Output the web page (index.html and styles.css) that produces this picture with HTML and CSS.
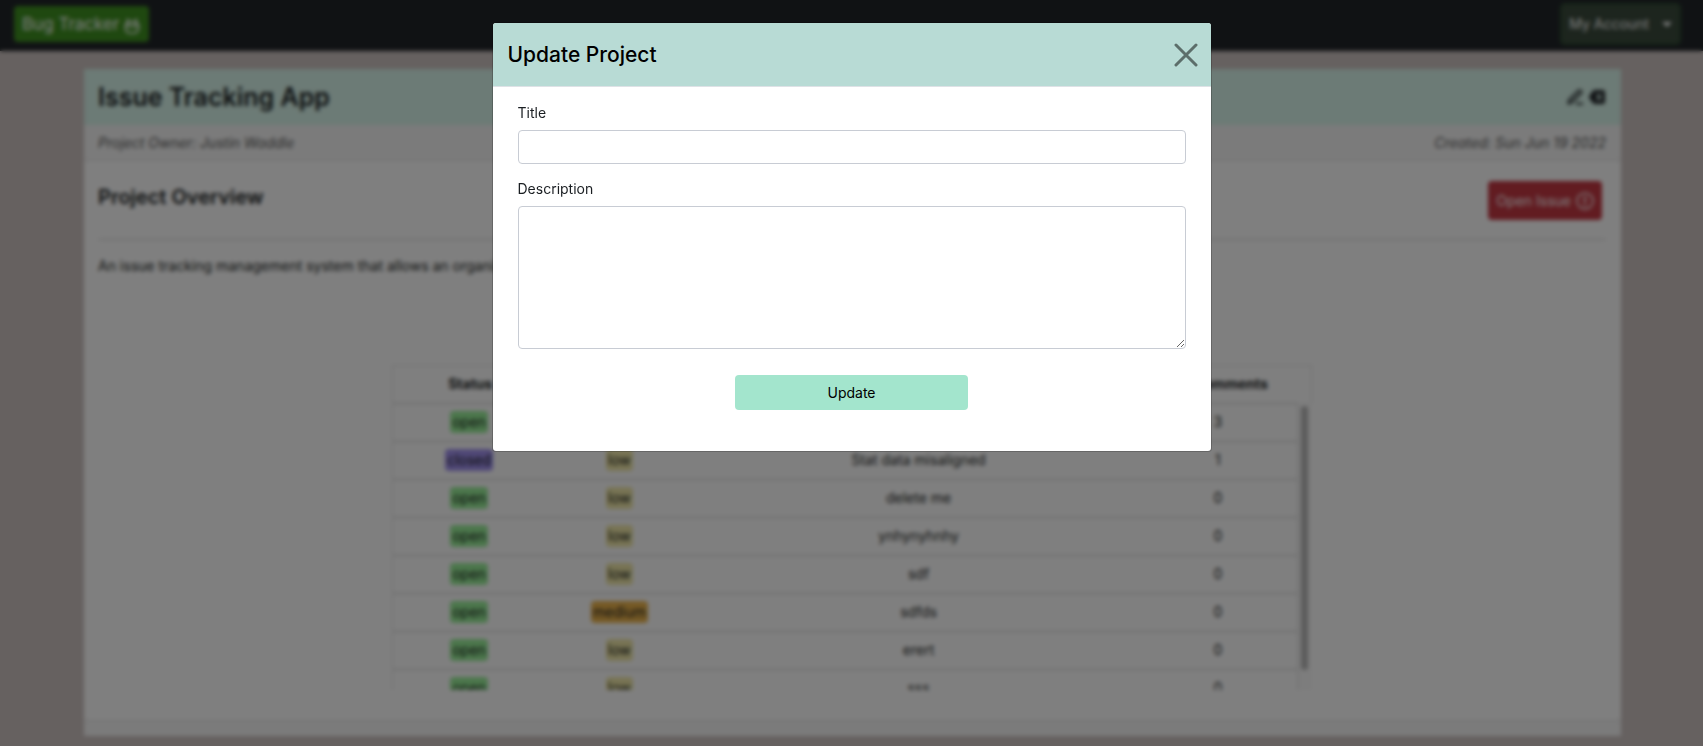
FILE: index.html
```html
<!DOCTYPE html>
<html lang="en">
<head>
<meta charset="utf-8">
<meta name="viewport" content="width=device-width, initial-scale=1">
<title>Bug Tracker</title>
<link rel="stylesheet" href="styles.css">
</head>
<body>
<header class="navbar">
  <a class="brand" href="#">Bug Tracker
    <svg class="icon-bug" viewBox="0 0 16 16" fill="none" stroke="currentColor" stroke-width="1.7" aria-hidden="true"><path d="M3 .8l2 3M13 .8l-2 3M5.500 3.800h5c2.800 0 4.200 2.200 4.200 5s-1.500 6.200-4.200 6.200h-5c-2.700 0-4.200-3.400-4.200-6.200s1.400-5 4.200-5zM4 6v2.200h8V6"/></svg>
  </a>
  <button class="account" type="button">My Account <span class="caret"></span></button>
</header>

<main class="card">
  <div class="card-header">
    <h1 class="project-name">Issue Tracking App</h1>
    <div class="actions">
      <button class="icon-button" type="button" aria-label="Edit project">
        <svg viewBox="0 0 16 16" fill="none" stroke="currentColor" stroke-width="1.900" stroke-linejoin="round" aria-hidden="true"><path d="M1.200 14.500l1-3.500L11.500 1.700c1.500-1.500 4 1 2.500 2.500L4.700 13.500l-3.500 1zM9 14.800h7"/></svg>
      </button>
      <button class="icon-button" type="button" aria-label="Delete project">
        <svg viewBox="0 0 16 16" fill="currentColor" aria-hidden="true"><path fill-rule="evenodd" d="M5.500 1H14a2 2 0 0 1 2 2v10a2 2 0 0 1-2 2H5.500a2 2 0 0 1-1.500-.7L.3 9a1.500 1.500 0 0 1 0-2L4 1.700A2 2 0 0 1 5.500 1zM7 5.200L9.200 8 7 10.800l1 .9L10 9.500l2 2.200 1-.9L10.900 8 13 5.200l-1-.9-2 2.200-2-2.200z"/></svg>
      </button>
    </div>
  </div>
  <div class="card-meta"><span>Project Owner: Justin Waddle</span><span>Created: Sun Jun 19 2022</span></div>
  <div class="card-body">
    <div class="overview">
      <h2 class="overview-title">Project Overview</h2>
      <button class="open-issue" type="button">Open Issue
        <svg viewBox="0 0 18 18" fill="none" stroke="currentColor" stroke-width="1.500" aria-hidden="true"><circle cx="9" cy="9" r="8"/><path d="M9 4.500v6M9 12v2" stroke-width="2"/></svg>
      </button>
    </div>
    <p class="summary">An issue tracking management system that allows an organization to manage issues.</p>
    <div class="issues">
      <table class="issue-table">
        <thead><tr><th>Status</th><th>Priority</th><th>Title</th><th>Comments</th></tr></thead>
        <tbody>
          <tr><td><span class="tag open">open</span></td><td><span class="tag low">low</span></td><td>Add comments</td><td>3</td></tr>
          <tr><td><span class="tag closed">closed</span></td><td><span class="tag low">low</span></td><td>Stat data misaligned</td><td>1</td></tr>
          <tr><td><span class="tag open">open</span></td><td><span class="tag low">low</span></td><td>delete me</td><td>0</td></tr>
          <tr><td><span class="tag open">open</span></td><td><span class="tag low">low</span></td><td>ynhynyhnhy</td><td>0</td></tr>
          <tr><td><span class="tag open">open</span></td><td><span class="tag low">low</span></td><td>sdf</td><td>0</td></tr>
          <tr><td><span class="tag open">open</span></td><td><span class="tag medium">medium</span></td><td>sdfds</td><td>0</td></tr>
          <tr><td><span class="tag open">open</span></td><td><span class="tag low">low</span></td><td>erert</td><td>0</td></tr>
          <tr><td><span class="tag open">open</span></td><td><span class="tag low">low</span></td><td>sss</td><td>0</td></tr>
        </tbody>
      </table>
      <div class="scroll-track"><div class="scroll-thumb"></div></div>
    </div>
  </div>
  <div class="card-footer"></div>
</main>

<div class="backdrop">
  <section class="modal" role="dialog" aria-modal="true" aria-labelledby="modal-title">
    <div class="modal-header">
      <h2 class="modal-title" id="modal-title">Update Project</h2>
      <button class="close" type="button" aria-label="Close">
        <svg viewBox="0 0 24 24" fill="none" stroke="currentColor" stroke-width="3" stroke-linecap="round" aria-hidden="true"><path d="M2 2l20 20M22 2L2 22"/></svg>
      </button>
    </div>
    <form class="modal-body">
      <label for="title">Title</label>
      <input class="field" id="title" type="text">
      <label for="description">Description</label>
      <textarea class="field description" id="description"></textarea>
      <button class="update" type="button">Update</button>
    </form>
  </section>
</div>
</body>
</html>
```

FILE: styles.css
```css
* { box-sizing: border-box; }

body {
  margin: 0;
  background: #ccc2c0;
  color: #1a1e22;
  font: 14px/20px Inter, "Liberation Sans", sans-serif;
}

h1, h2, p { margin: 0; }
button { font: inherit; cursor: pointer; }
svg { display: block; }

.navbar {
  display: flex;
  align-items: center;
  justify-content: space-between;
  height: 51px;
  padding: 0 22px 3px 14px;
  background: #212529;
}

.brand {
  display: flex;
  align-items: center;
  gap: 5px;
  height: 36px;
  padding: 0 9px 0 8px;
  border-radius: 4px;
  background: #3e9020;
  color: #fff;
  font-size: 17px;
  text-decoration: none;
}

.icon-bug { width: 16px; height: 16px; margin-top: 4px; }

.account {
  display: flex;
  align-items: center;
  gap: 13px;
  height: 42px;
  padding: 0 7px;
  border: 2px solid #2c4a30;
  border-radius: 5px;
  background: #3a4a3c;
  color: #fff;
}

.caret {
  border: 5px solid transparent;
  border-top-color: #fff;
  border-bottom: 0;
}

.card { margin: 18px 82px 10px 84px; background: #fff; }

.card-header {
  display: flex;
  align-items: center;
  justify-content: space-between;
  height: 56px;
  padding: 0 16px 0 14px;
  background: #d9f6ec;
}

.project-name { font-size: 25px; line-height: 32px; font-weight: 600; }
.actions { display: flex; gap: 6px; }
.icon-button { padding: 0; border: 0; background: none; color: #212529; }
.icon-button svg { width: 16px; height: 16px; }

.card-meta {
  display: flex;
  justify-content: space-between;
  padding: 8px 15px 7px 14px;
  border-bottom: 1px solid #dfdfdf;
  background: #f7f7f7;
  color: #585858;
  font-style: italic;
}

.card-body { padding: 20px 15px 30px 14px; }

.overview {
  display: flex;
  align-items: flex-start;
  justify-content: space-between;
  padding: 0 4px 18px 0;
  border-bottom: 1px solid #d0d0d0;
}

.overview-title { font-size: 20px; line-height: 32px; font-weight: 600; }

.open-issue {
  display: flex;
  align-items: center;
  gap: 5px;
  height: 39px;
  margin-bottom: 1px;
  padding: 0 8px;
  border: 0;
  border-radius: 4px;
  background: #c43843;
  color: #fff;
}

.open-issue svg { width: 18px; height: 18px; }
.summary { padding: 16px 0 89px; }

.issues { position: relative; width: 61%; margin: 0 auto; }
.issue-table { display: block; border: solid #e0e0e0; border-width: 1px 1px 0; text-align: center; }
.issue-table thead, .issue-table tbody { display: block; }
.issue-table tbody { height: 286px; padding-right: 14px; overflow: hidden; }

.issue-table tr {
  display: grid;
  grid-template-columns: 142fr 158fr 440fr 158fr;
  padding-left: 5px;
  border-bottom: 1px solid #c8c8c8;
}

.issue-table th, .issue-table td { padding: 8px 0; }
.issue-table th { padding-bottom: 9px; font-weight: 700; }
.issue-table td { padding: 7px 0 8px; line-height: 22px; }

.tag { display: inline-block; padding: 0 2px; border-radius: 4px; }
.open { background: #98ee98; }
.closed { background: #a090ee; }
.low { background: #f0e8a8; }
.medium { background: #ecb44c; }

.scroll-track {
  position: absolute;
  top: 38px;
  right: 0;
  bottom: 0;
  width: 15px;
  padding: 3px 4px 20px 3px;
  border-left: 1px solid #dcdcdc;
  background: #fafafa;
}

.scroll-thumb { height: 100%; border-radius: 4px; background: #b8b8b8; }
.card-footer { height: 16px; border-top: 1px solid #dfdfdf; background: #f7f7f7; }

.backdrop {
  position: fixed;
  inset: 0;
  display: flex;
  align-items: flex-start;
  justify-content: center;
  padding-top: 22px;
  background: rgba(0, 0, 0, .5);
  backdrop-filter: blur(2px);
}

.modal {
  width: 720px;
  max-width: 100%;
  border: 1px solid rgba(0, 0, 0, .2);
  border-radius: 4px;
  background: #fff;
  background-clip: padding-box;
}

.modal-header {
  display: flex;
  align-items: center;
  justify-content: space-between;
  height: 64px;
  padding: 0 13px 0 15px;
  border-bottom: 1px solid #dee2e6;
  border-radius: 3px 3px 0 0;
  background: #b8dbd5;
}

.modal-title { color: #000; font-size: 21px; line-height: 28px; font-weight: 500; }
.close { padding: 0; border: 0; background: none; color: #5c6e6a; }
.close svg { width: 24px; height: 24px; }

.modal-body {
  display: flex;
  flex-direction: column;
  padding: 16px 25px 41px;
}

.modal-body label { margin-bottom: 7px; }

.field {
  width: 100%;
  height: 34px;
  margin: 0 0 15px;
  padding: 6px 12px;
  border: 1px solid #c8ccd4;
  border-radius: 4px;
  background: #fff;
  font: inherit;
}

.description { height: 143px; margin-bottom: 26px; resize: vertical; }

.update {
  align-self: center;
  width: 35%;
  height: 35px;
  border: 0;
  border-radius: 4px;
  background: #a3e5cd;
  color: #000;
}
```
